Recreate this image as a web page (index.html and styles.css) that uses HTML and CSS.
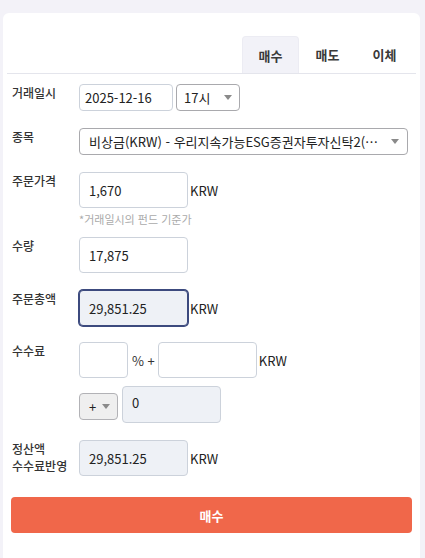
FILE: index.html
```html
<!DOCTYPE html>
<html lang="ko">
<head>
<meta charset="utf-8">
<link rel="stylesheet" href="styles.css">
</head>
<body>
<div class="card">
  <div class="tabs">
    <div class="tab active">매수</div>
    <div class="tab">매도</div>
    <div class="tab">이체</div>
  </div>
  <div class="form">
    <div class="row r1">
      <div class="label">거래일시</div>
      <div class="field">
        <div class="input date">2025-12-16</div>
        <div class="select hour"><span>17시</span><span class="arrow"></span></div>
      </div>
    </div>
    <div class="row r2">
      <div class="label">종목</div>
      <div class="field">
        <div class="select wide"><span>비상금(KRW) - 우리지속가능ESG증권자투자신탁2(…</span><span class="arrow"></span></div>
      </div>
    </div>
    <div class="row r3">
      <div class="label">주문가격</div>
      <div class="col">
        <div class="field">
          <div class="input tall mid">1,670</div>
          <span class="unit">KRW</span>
        </div>
        <div class="hint">*거래일시의 펀드 기준가</div>
      </div>
    </div>
    <div class="row r4">
      <div class="label">수량</div>
      <div class="field">
        <div class="input tall mid">17,875</div>
      </div>
    </div>
    <div class="row r5">
      <div class="label">주문총액</div>
      <div class="field">
        <div class="input tall mid ro focus">29,851.25</div>
        <span class="unit">KRW</span>
      </div>
    </div>
    <div class="row r6">
      <div class="label">수수료</div>
      <div class="col">
        <div class="field">
          <div class="input tall small"></div>
          <span class="pct">% +</span>
          <div class="input tall fee"></div>
          <span class="unit">KRW</span>
        </div>
        <div class="field sub">
          <div class="select sign"><span>+</span><span class="arrow"></span></div>
          <div class="input ro zero">0</div>
        </div>
      </div>
    </div>
    <div class="row r7">
      <div class="label two">정산액<br>수수료반영</div>
      <div class="field">
        <div class="input tall mid ro">29,851.25</div>
        <span class="unit">KRW</span>
      </div>
    </div>
    <button class="submit">매수</button>
  </div>
</div>
</body>
</html>
```
FILE: styles.css
```css
* { box-sizing: border-box; }
html, body { margin: 0; padding: 0; }
body {
  background: #f3f2f8;
  font-family: "Noto Sans CJK KR", "Noto Sans", sans-serif;
  color: #222;
  height: 558px;
  overflow: hidden;
}
.card {
  background: #fff;
  margin: 13px 5px 0 3px;
  border-radius: 6px;
  padding: 23px 4px 24px 4px;
  min-height: 560px;
}
.tabs {
  display: flex;
  justify-content: flex-end;
  border-bottom: 1px solid #e4e5ec;
  padding-right: 3px;
}
.tab {
  width: 57px;
  height: 37px;
  display: flex;
  align-items: center;
  justify-content: center;
  font-size: 13px;
  font-weight: 700;
  color: #3a3a3a;
  border-radius: 4px 4px 0 0;
}
.tab.active {
  background: #f2f2f8;
  border: 1px solid #ececf3;
  border-bottom: none;
}
.form { padding: 0 4px 0 4px; }
.row { display: flex; align-items: flex-start; }
.label {
  width: 68px;
  padding-left: 1px;
  font-size: 12px;
  line-height: 18px;
  font-weight: 500;
  color: #333;
  flex-shrink: 0;
}
.label.two { line-height: 17px; padding-top: 0; }
.field { display: flex; align-items: center; }
.col { display: flex; flex-direction: column; }
.r1 { margin-top: 10px; }
.r2 { margin-top: 17px; }
.r2 .field { flex: 1; margin-right: 4px; }
.r3 { margin-top: 17px; }
.r4 { margin-top: 11px; }
.r5 { margin-top: 17px; }
.r6 { margin-top: 16px; }
.r7 { margin-top: 17px; }
.input {
  border: 1px solid #ccd2db;
  border-radius: 4px;
  font-size: 13px;
  color: #222;
  display: flex;
  align-items: center;
  background: #fff;
}
.input.date { width: 94px; height: 27px; padding-left: 5px; }
.input.tall { height: 36px; }
.input.mid { width: 109px; padding-left: 9px; }
.input.ro { background: #eef1f6; }
.input.focus {
  border-color: #3c4a7e;
  box-shadow: 0 0 0 1px #3c4a7e;
}
.input.small { width: 49px; }
.input.fee { width: 99px; }
.input.zero { width: 99px; height: 37px; padding-left: 9px; margin-left: 4px; align-items: flex-start; padding-top: 6px; }
.select {
  border: 1px solid #a9a9ad;
  border-radius: 4px;
  height: 27px;
  font-size: 13px;
  color: #222;
  display: flex;
  align-items: center;
  justify-content: space-between;
  background: #fff;
}
.arrow {
  width: 0; height: 0;
  border-left: 4px solid transparent;
  border-right: 4px solid transparent;
  border-top: 5px solid #8a8a8a;
}
.select.hour { width: 64px; margin-left: 3px; padding: 0 7px 0 7px; }
.select.wide { flex: 1; padding: 0 8px 0 9px; }
.select.sign {
  width: 39px;
  padding: 0 7px 0 9px;
  background: #efefef;
  border-color: #b2b2b6;
  font-size: 13px;
}
.unit { font-size: 13px; margin-left: 2px; color: #222; }
.pct { font-size: 13px; margin: 0 3px 0 4px; color: #333; }
.hint { font-size: 11px; color: #aaa; margin-top: 4px; line-height: 14px; }
.sub { margin-top: 8px; align-items: flex-start; }
.sub .select.sign { margin-top: 7px; }
.submit {
  display: block;
  width: 100%;
  margin-top: 21px;
  height: 36px;
  border: none;
  border-radius: 4px;
  background: #f0674a;
  color: #fff;
  font-family: inherit;
  font-size: 13px;
  font-weight: 700;
}
```
